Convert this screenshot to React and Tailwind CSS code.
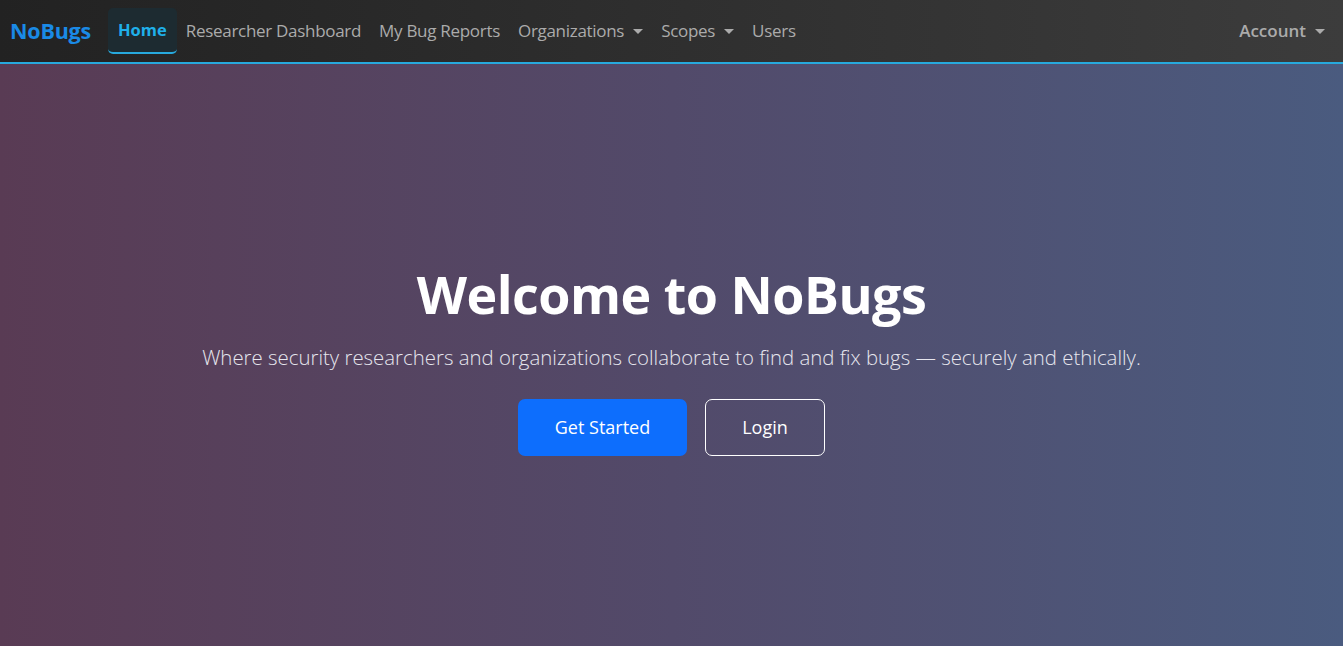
import { useState } from "react";

const links = [
  { label: "Researcher Dashboard" },
  { label: "My Bug Reports" },
  { label: "Organizations", caret: true },
  { label: "Scopes", caret: true },
  { label: "Users" },
];

function Caret() {
  return (
    <span className="ml-[9px] inline-block h-0 w-0 border-x-[5px] border-t-[5px] border-x-transparent border-t-current align-middle" />
  );
}

export default function App() {
  const [active] = useState("Home");

  return (
    <div className="flex min-h-screen flex-col font-['Open_Sans',sans-serif]">
      <nav className="flex h-[64px] items-center border-b-2 border-[#27a9dd] bg-gradient-to-r from-[#222222] to-[#3c3c3c] pl-[10px] pr-[18px]">
        <a className="mr-[17px] text-[21.5px] font-bold tracking-[-0.2px] text-[#1a8ae6]">NoBugs</a>
        <ul className="flex items-center">
          <li>
            <a className="flex h-[46px] items-center rounded-[5px] border-b-2 border-[#27a9dd] bg-[#1d2b31] px-[10px] text-[16.5px] font-bold text-[#1fb0ea]">
              {active}
            </a>
          </li>
          {links.map((l) => (
            <li key={l.label}>
              <a className="flex h-[46px] items-center px-[9px] text-[17px] tracking-[-0.3px] text-[#ababab]">
                {l.label}
                {l.caret && <Caret />}
              </a>
            </li>
          ))}
        </ul>
        <a className="ml-auto flex items-center text-[17px] font-semibold text-[#ababab]">
          Account
          <Caret />
        </a>
      </nav>

      <main className="flex flex-1 flex-col items-center justify-center bg-gradient-to-r from-[#593b54] via-[#524a6a] to-[#4a5b7f] pt-[8px] text-center text-white">
        <h1 className="text-[52px] font-bold leading-[1.2] tracking-[-0.5px]">Welcome to NoBugs</h1>
        <p className="mt-[17px] text-[20.4px] font-light text-[#e6e6ee]">
          Where security researchers and organizations collaborate to find and fix bugs — securely and ethically.
        </p>
        <div className="mt-[26px] flex gap-[18px]">
          <button className="h-[57px] w-[169px] rounded-[7px] bg-[#0d6efd] text-[18px] text-white">Get Started</button>
          <button className="h-[57px] w-[120px] rounded-[7px] border border-white text-[18px] text-white">Login</button>
        </div>
      </main>
    </div>
  );
}
